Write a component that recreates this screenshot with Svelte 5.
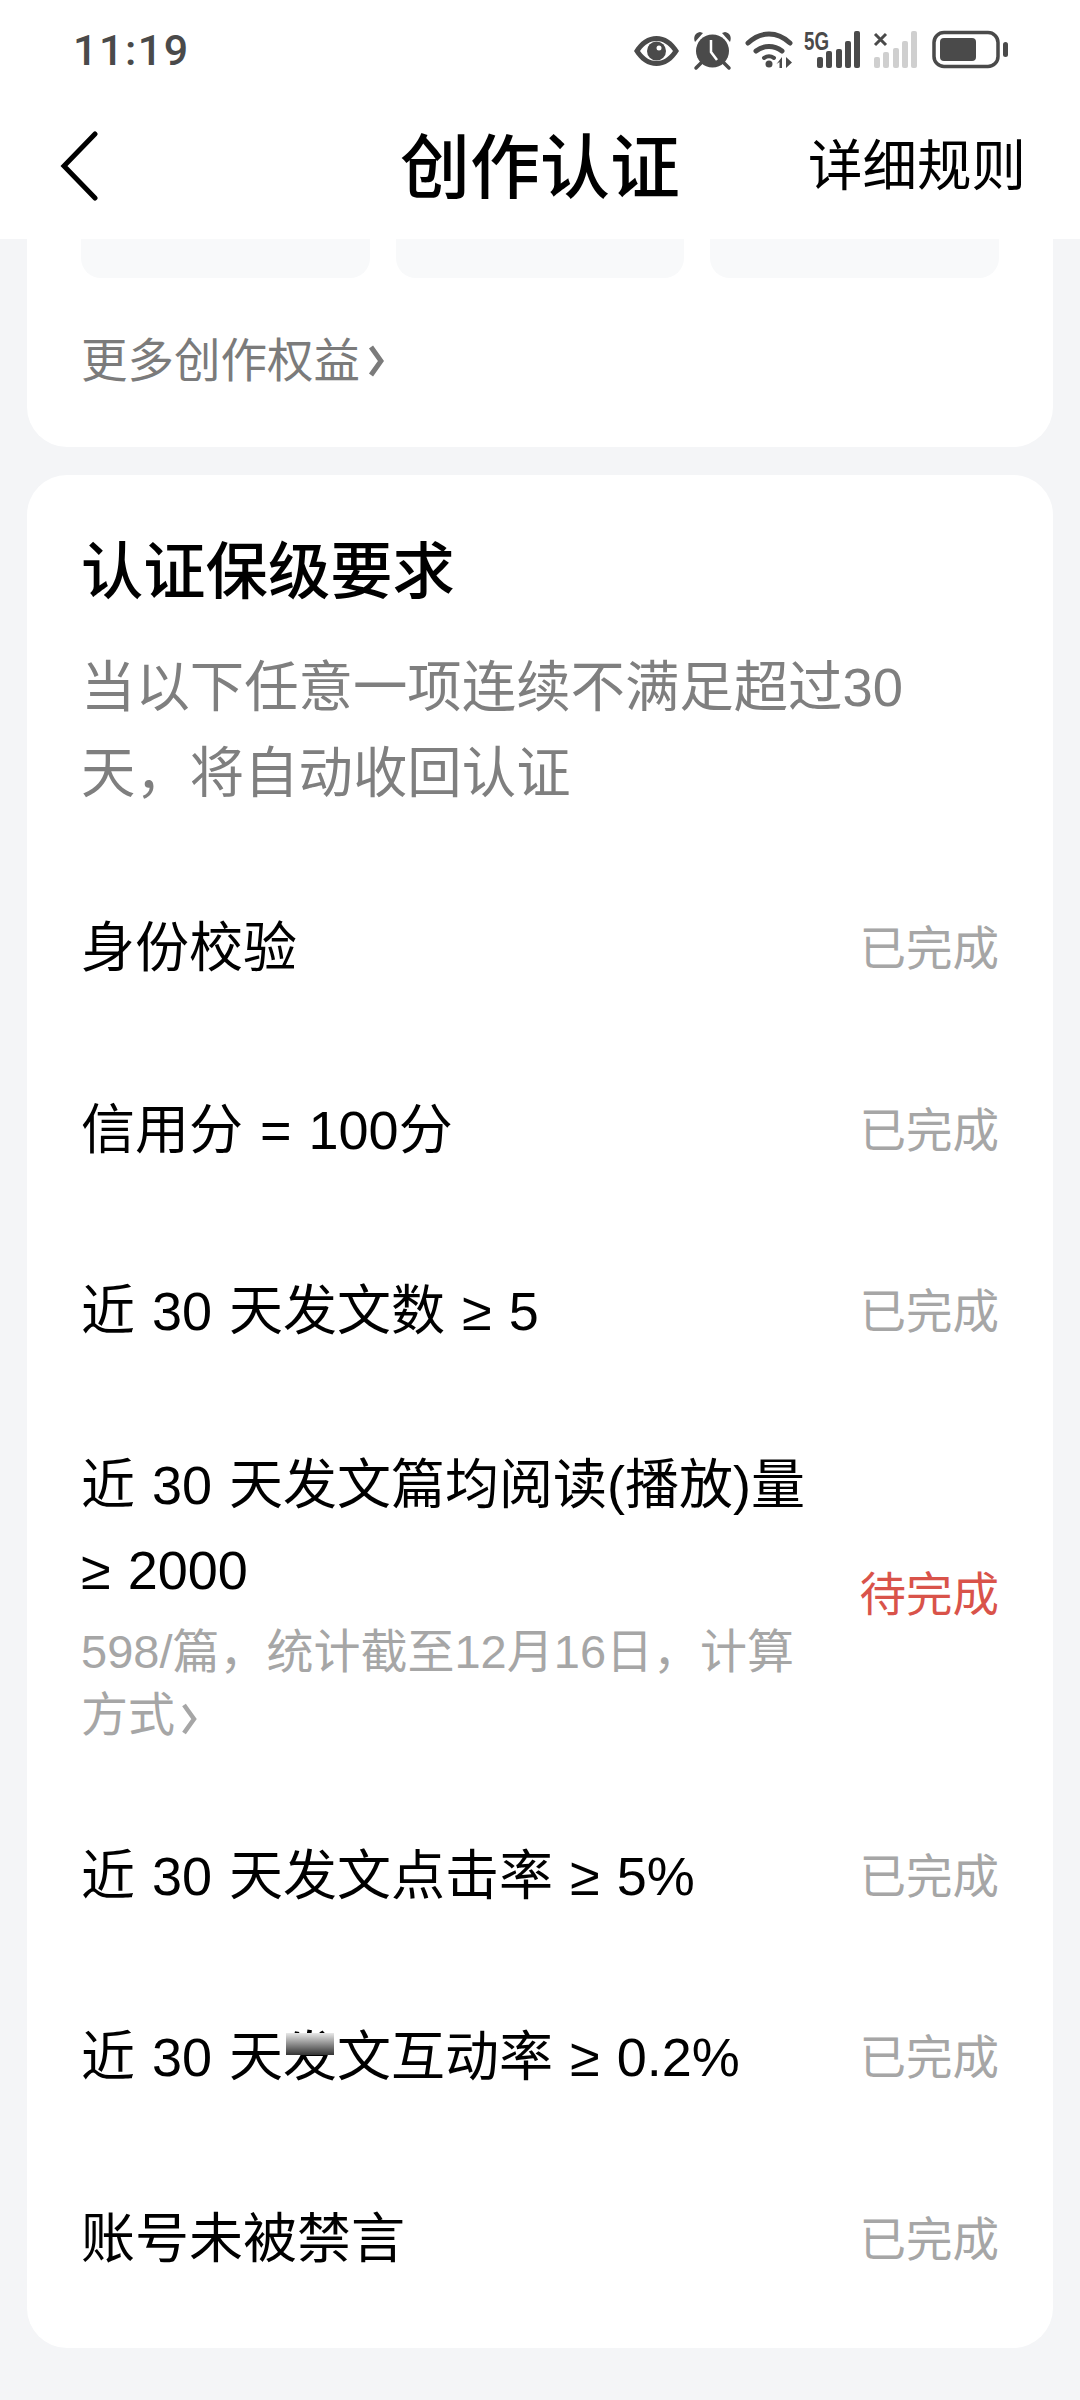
<script>
  const rows = [
    { label: "身份校验" },
    { label: "信用分 = 100分" },
    { label: "近 30 天发文数 ≥ 5" },
    { label: "近 30 天发文篇均阅读(播放)量 ≥ 2000", sub: "598/篇，统计截至12月16日，计算方式", pending: true },
    { label: "近 30 天发文点击率 ≥ 5%" },
    { label: "blur" },
    { label: "账号未被禁言" }
  ];
</script>

<div class="page">
  <header class="top">
    <div class="status">
      <span class="time">11:19</span>
      <svg class="status-icons" viewBox="635 20 375 62" width="375" height="62">
        <g fill="#4a4a4a">
          <!-- eye -->
          <path fill-rule="evenodd" d="M635 52c6-10 14-15 22.500-15s16.500 5 22.500 15c-6 10-14 15-22.500 15s-16.500-5-22.500-15zm6 0c5 7 10.500 10 16.500 10s11.500-3 16.500-10c-5-7-10.500-10-16.500-10s-11.500 3-16.500 10z" />
          <circle cx="657.500" cy="52" r="9.500" />
          <circle cx="660" cy="49" r="2.500" fill="#fff" />
          <!-- alarm -->
          <circle cx="713.500" cy="52" r="16.500" />
          <path d="M696 43c-2-5 0-9 5-10l3 1zM731 43c2-5 0-9-5-10l-3 1z" />
          <path d="M703 63l-6 6M724 63l6 6" stroke="#4a4a4a" stroke-width="3.500" stroke-linecap="round" />
          <path d="M712 41v12l6 8" fill="none" stroke="#fff" stroke-width="2.500" />
          <!-- wifi -->
          <g fill="none" stroke="#4a4a4a" stroke-linecap="round">
            <path d="M749 44c13-12 29-12 42 0" stroke-width="5" />
            <path d="M757 52c8-6 18-6 26 0" stroke-width="5" />
            <path d="M765 59c3-2 7-2 10 0" stroke-width="4" />
          </g>
          <circle cx="770" cy="65" r="3.500" />
          <path d="M783 58v11h-2.500v-6l-3 2zM787 58l6 5.500-6 5.500z" />
          <!-- 5G signal -->
          <text x="805" y="51" font-family="'Liberation Sans', sans-serif" font-size="25" font-weight="700" textLength="25" lengthAdjust="spacingAndGlyphs">5G</text>
          <rect x="818" y="58" width="6" height="11" rx="2" />
          <rect x="827" y="52" width="6" height="17" rx="2" />
          <rect x="837" y="50" width="6" height="19" rx="2" />
          <rect x="846" y="42" width="6" height="27" rx="2" />
          <rect x="855" y="32" width="6" height="37" rx="2" />
          <!-- empty signal -->
          <path d="M876 35l11 11M887 35l-11 11" stroke="#4a4a4a" stroke-width="3" />
          <g fill="#cfcfcf">
            <rect x="875" y="58" width="6" height="11" rx="2" />
            <rect x="884" y="53" width="6" height="16" rx="2" />
            <rect x="894" y="49" width="6" height="20" rx="2" />
            <rect x="903" y="42" width="6" height="27" rx="2" />
            <rect x="912" y="32" width="6" height="37" rx="2" />
          </g>
          <!-- battery -->
          <rect x="935" y="33.500" width="64" height="34" rx="10" fill="none" stroke="#4a4a4a" stroke-width="3.500" />
          <rect x="941" y="39" width="36" height="23" rx="4" />
          <rect x="1004" y="43" width="5" height="15" rx="2.500" />
        </g>
      </svg>
    </div>
    <nav class="bar">
      <svg class="back" viewBox="0 0 40 70" width="40" height="70">
        <path d="M37 3L6 35l31 32" fill="none" stroke="#000" stroke-width="5" stroke-linecap="round" stroke-linejoin="miter" />
      </svg>
      <h1>创作认证</h1>
      <span class="rules">详细规则</span>
    </nav>
  </header>

  <section class="card first">
    <div class="tiles">
      <div class="tile"></div>
      <div class="tile"></div>
      <div class="tile"></div>
    </div>
    <div class="more">
      更多创作权益
      <svg viewBox="0 0 16 32" width="16" height="32">
        <path d="M3 2l10 14L3 30" fill="none" stroke="#7b7b7b" stroke-width="5" />
      </svg>
    </div>
  </section>

  <section class="card second">
    <h2>认证保级要求</h2>
    <p class="desc">当以下任意一项连续不满足超过30天，将自动收回认证</p>
    {#each rows as row}
      <div class="row" class:tall={row.sub}>
        <div class="info">
          <div class="label">
            {#if row.label === "blur"}
              近 30 天<span class="smudge">发</span>文互动率 ≥ 0.2%
            {:else}
              {row.label}
            {/if}
          </div>
          {#if row.sub}
            <div class="sub">
              {row.sub}<svg viewBox="0 0 16 32" width="16" height="32">
                <path d="M3 2l10 14L3 30" fill="none" stroke="#a6a6a6" stroke-width="4.500" />
              </svg>
            </div>
          {/if}
        </div>
        <span class="state" class:pending={row.pending}>{row.pending ? "待完成" : "已完成"}</span>
      </div>
    {/each}
  </section>
</div>

<style>
  :global(body) {
    margin: 0;
    background: #f4f5f7;
  }

  .page {
    width: 1080px;
    height: 2400px;
    overflow: hidden;
    background: #f4f5f7;
    font-family: "Liberation Sans", "Noto Sans CJK SC", sans-serif;
    color: #000;
  }

  .top {
    background: #fff;
    height: 239px;
  }

  .status {
    height: 100px;
    display: flex;
    align-items: center;
    justify-content: space-between;
    padding: 0 71px 0 73px;
  }

  .time {
    font-family: Roboto, sans-serif;
    font-size: 43px;
    font-weight: 500;
    letter-spacing: 1.500px;
    color: #4a4a4a;
  }

  .status-icons {
    display: block;
  }

  .bar {
    position: relative;
    height: 131px;
    padding: 0 54px 8px 58px;
    display: flex;
    align-items: center;
    justify-content: space-between;
  }

  .back {
    display: block;
  }

  h1 {
    position: absolute;
    left: 0;
    right: 0;
    margin: 0 0 6px;
    text-align: center;
    font-size: 70px;
    font-weight: 500;
  }

  .rules {
    font-size: 54.500px;
    margin-bottom: 8px;
  }

  .card {
    margin: 0 27px;
    background: #fff;
    border-radius: 0 0 40px 40px;
  }

  .first {
    height: 208px;
    padding: 0 54px;
    margin-bottom: 28px;
    overflow: hidden;
  }

  .tiles {
    display: grid;
    grid-template-columns: repeat(3, 1fr);
    gap: 26px;
  }

  .tile {
    height: 39px;
    background: #f8f9fa;
    border-radius: 0 0 20px 20px;
  }

  .more {
    display: flex;
    align-items: center;
    gap: 8px;
    margin-top: 51px;
    font-size: 46.500px;
    line-height: 64px;
    color: #7b7b7b;
  }

  .second {
    border-radius: 40px;
    padding: 53px 54px 22px;
  }

  h2 {
    margin: 0;
    font-size: 62.300px;
    line-height: 90px;
    font-weight: 500;
  }

  .desc {
    margin: 27px 0 37px;
    width: 850px;
    font-size: 54.400px;
    line-height: 86px;
    color: #7f7f7f;
  }

  .row {
    height: 181.500px;
    display: flex;
    align-items: center;
    justify-content: space-between;
  }

  .row.tall {
    height: 383px;
  }

  .info {
    width: 735px;
    padding-top: 8px;
  }

  .label {
    font-size: 54px;
    line-height: 85px;
    word-spacing: 2px;
  }

  .sub {
    margin-top: 7px;
    font-size: 47px;
    line-height: 63px;
    color: #a6a6a6;
  }

  .sub svg {
    vertical-align: -4px;
    margin-left: 6px;
  }

  .state {
    font-size: 46.500px;
    color: #a6a6a6;
  }

  .state.pending {
    color: #d9534a;
  }

  .smudge {
    position: relative;
  }

  /* blurred patch sitting on the top of the character */
  .smudge::after {
    content: "";
    position: absolute;
    left: 3px;
    right: 3px;
    top: 6px;
    height: 22px;
    background: linear-gradient(#e8e8e8, #333);
  }
</style>
